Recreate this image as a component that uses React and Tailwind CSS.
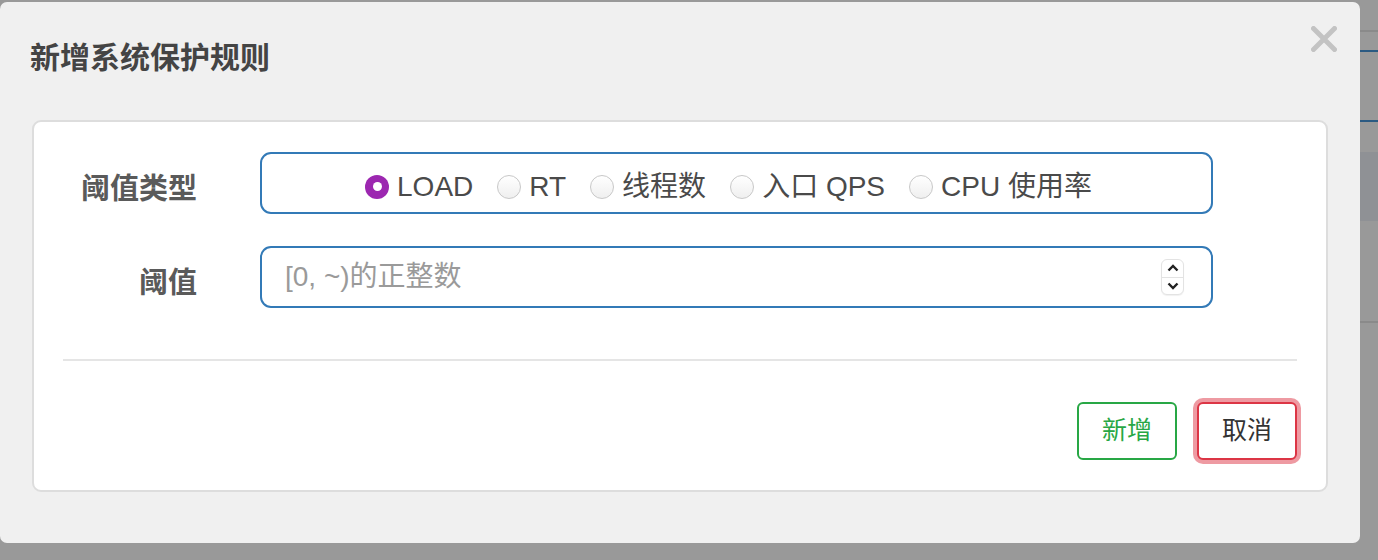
const RADIOS = [
  { label: 'LOAD', checked: true },
  { label: 'RT' },
  { label: '线程数' },
  { label: '入口 QPS' },
  { label: 'CPU 使用率' },
];

function Radio({ label, checked }) {
  return (
    <label className="flex items-center gap-[8px] cursor-pointer">
      {checked ? (
        <span className="w-[24px] h-[24px] rounded-full bg-[#9c27b0] flex items-center justify-center">
          <span className="w-[9px] h-[9px] rounded-full bg-white" />
        </span>
      ) : (
        <span className="w-[24px] h-[24px] rounded-full border border-[#c8c8c8] bg-gradient-to-b from-[#ffffff] to-[#efefef]" />
      )}
      <span className="text-[28px] leading-[40px] text-[#4a4a4a]">{label}</span>
    </label>
  );
}

function Spinner() {
  return (
    <div className="w-[23px] h-[36px] rounded-[6px] border border-[#e3e3e3] bg-white flex flex-col shadow-[0_1px_1px_rgba(0,0,0,0.06)]">
      <div className="flex-1 flex items-center justify-center border-b border-[#e3e3e3]">
        <svg width="12" height="8" viewBox="0 0 12 8">
          <path d="M1.5 6.5 L6 2 L10.5 6.5" fill="none" stroke="#222" strokeWidth="2.4" />
        </svg>
      </div>
      <div className="flex-1 flex items-center justify-center">
        <svg width="12" height="8" viewBox="0 0 12 8">
          <path d="M1.5 1.5 L6 6 L10.5 1.5" fill="none" stroke="#222" strokeWidth="2.4" />
        </svg>
      </div>
    </div>
  );
}

export default function App() {
  return (
    <div className="relative w-[1378px] h-[560px] overflow-hidden bg-[#999999] font-['Liberation_Sans','Noto_Sans_CJK_SC',sans-serif]">
      {/* page behind the modal */}
      <div className="flex flex-col">
        <div className="h-[30px]" />
        <div className="h-[2px] bg-[#8a8a8a]" />
        <div className="h-[18px]" />
        <div className="h-[2px] bg-[#2b5a82]" />
        <div className="h-[68px]" />
        <div className="h-[2px] bg-[#2b5a82]" />
        <div className="h-[30px]" />
        <div className="h-[69px] bg-[#8f9195]" />
        <div className="h-[100px]" />
        <div className="h-[2px] bg-[#8a8a8a]" />
      </div>

      {/* modal */}
      <div className="absolute left-0 top-[2px] w-[1360px] h-[541px] rounded-[7px] bg-[#f0f0f0] flex flex-col">
        <div className="relative h-[118px] px-[30px] pt-[38px]">
          <h4 className="text-[30px] leading-[36px] font-semibold text-[#444444]">新增系统保护规则</h4>
          <button className="absolute right-[23px] top-[24px] w-[26px] h-[26px]">
            <svg width="26" height="26" viewBox="0 0 26 26">
              <path d="M2.5 2.5 L23.5 23.5 M23.5 2.5 L2.5 23.5" stroke="#c3c3c3" strokeWidth="5" strokeLinecap="round" />
            </svg>
          </button>
        </div>

        <div className="mx-[32px] h-[372px] border-2 border-[#dddddd] rounded-[9px] bg-white flex flex-col pt-[30px]">
          {/* threshold type */}
          <div className="flex">
            <div className="w-[163px] text-right pt-[17px] leading-[40px] text-[29px] font-bold text-[#5a5a5a]">阈值类型</div>
            <div className="ml-[63px] w-[953px] h-[62px] border-2 border-[#337ab7] rounded-[11px] flex items-center justify-center gap-[24px] pr-[16px] pt-[7px]">
              {RADIOS.map((r) => (
                <Radio key={r.label} {...r} />
              ))}
            </div>
          </div>

          {/* threshold */}
          <div className="flex mt-[32px]">
            <div className="w-[163px] text-right pt-[17px] leading-[40px] text-[29px] font-bold text-[#5a5a5a]">阈值</div>
            <div className="ml-[63px] w-[953px] h-[62px] border-2 border-[#337ab7] rounded-[11px] flex items-center pl-[23px] pr-[27px]">
              <input
                className="flex-1 min-w-0 bg-transparent outline-none text-[28px] text-[#333] placeholder:text-[#9a9a9a]"
                placeholder="[0, ~)的正整数"
              />
              <Spinner />
            </div>
          </div>

          <div className="mx-[29px] mt-[51px] h-[2px] bg-[#e5e5e5]" />

          <div className="mx-[29px] mt-[41px] flex justify-end gap-[20px]">
            <button className="w-[100px] h-[58px] border-2 border-[#28a745] rounded-[6px] bg-white text-[25px] text-[#28a745]">新增</button>
            <button className="w-[100px] h-[58px] border-2 border-[#dc3545] rounded-[6px] bg-white text-[25px] text-[#333333] ring-4 ring-[#ee9aa2]">取消</button>
          </div>
        </div>
      </div>
    </div>
  );
}
